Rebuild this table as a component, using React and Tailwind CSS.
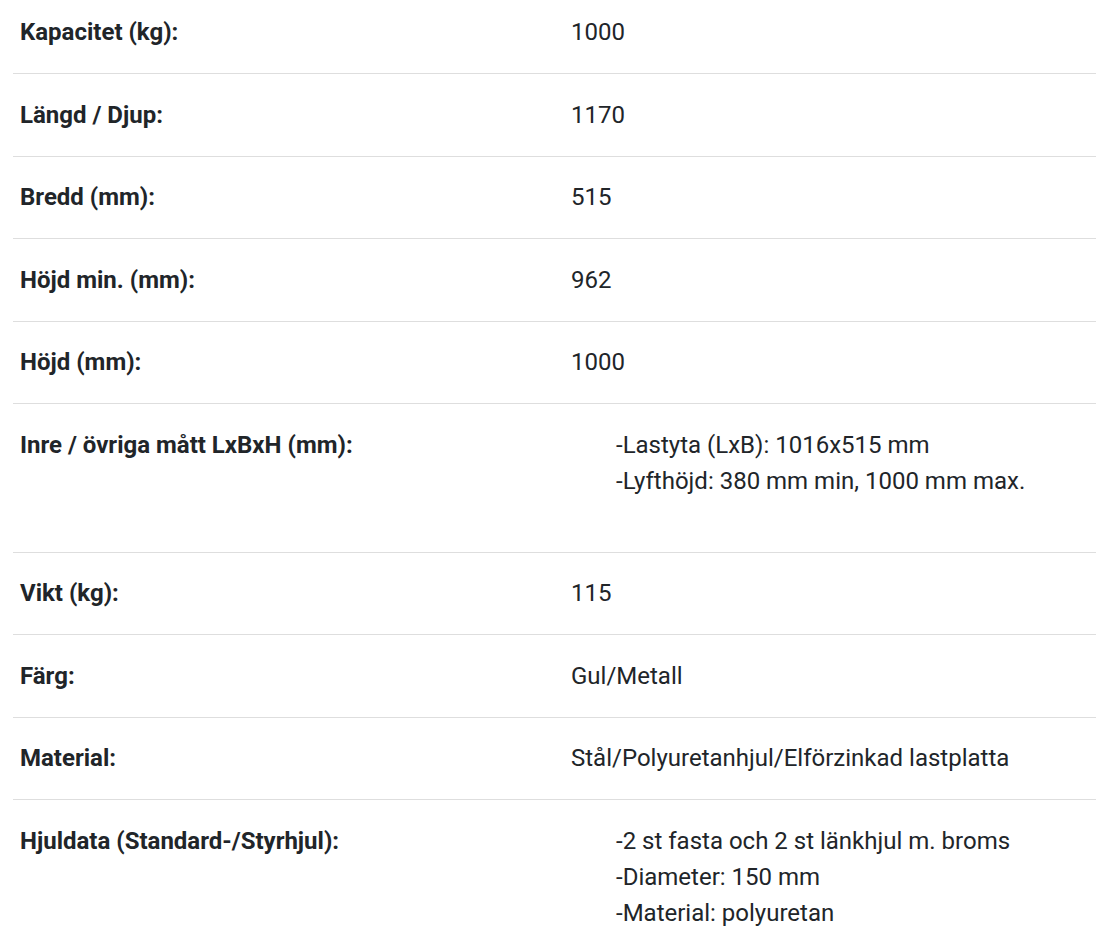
const SPECS = [
  { label: "Kapacitet (kg):", value: "1000" },
  { label: "Längd / Djup:", value: "1170" },
  { label: "Bredd (mm):", value: "515" },
  { label: "Höjd min. (mm):", value: "962" },
  { label: "Höjd (mm):", value: "1000" },
  {
    label: "Inre / övriga mått LxBxH (mm):",
    list: ["-Lastyta (LxB): 1016x515 mm", "-Lyfthöjd: 380 mm min, 1000 mm max."],
  },
  { label: "Vikt (kg):", value: "115" },
  { label: "Färg:", value: "Gul/Metall" },
  { label: "Material:", value: "Stål/Polyuretanhjul/Elförzinkad lastplatta" },
  {
    label: "Hjuldata (Standard-/Styrhjul):",
    list: [
      "-2 st fasta och 2 st länkhjul m. broms",
      "-Diameter: 150 mm",
      "-Material: polyuretan",
    ],
  },
];

export default function App() {
  return (
    <div
      className="bg-white min-h-screen pl-[13px] pr-px text-[#212529] text-[24px] leading-[36px]"
      style={{ fontFamily: "Roboto, 'Liberation Sans', sans-serif" }}
    >
      {SPECS.map((row, i) => (
        <div
          key={row.label}
          className={`grid grid-cols-[550px_1fr] ${i > 0 ? "border-t border-[#dedede] pt-[22.5px]" : "pt-[14px]"} pb-[23px]`}
        >
          <div className="pl-[7px] font-bold">{row.label}</div>
          <div className="pl-[8px]">
            {row.list ? (
              <ul className="pl-[45px] mb-[30px]">
                {row.list.map((li) => (
                  <li key={li}>{li}</li>
                ))}
              </ul>
            ) : (
              row.value
            )}
          </div>
        </div>
      ))}
    </div>
  );
}
